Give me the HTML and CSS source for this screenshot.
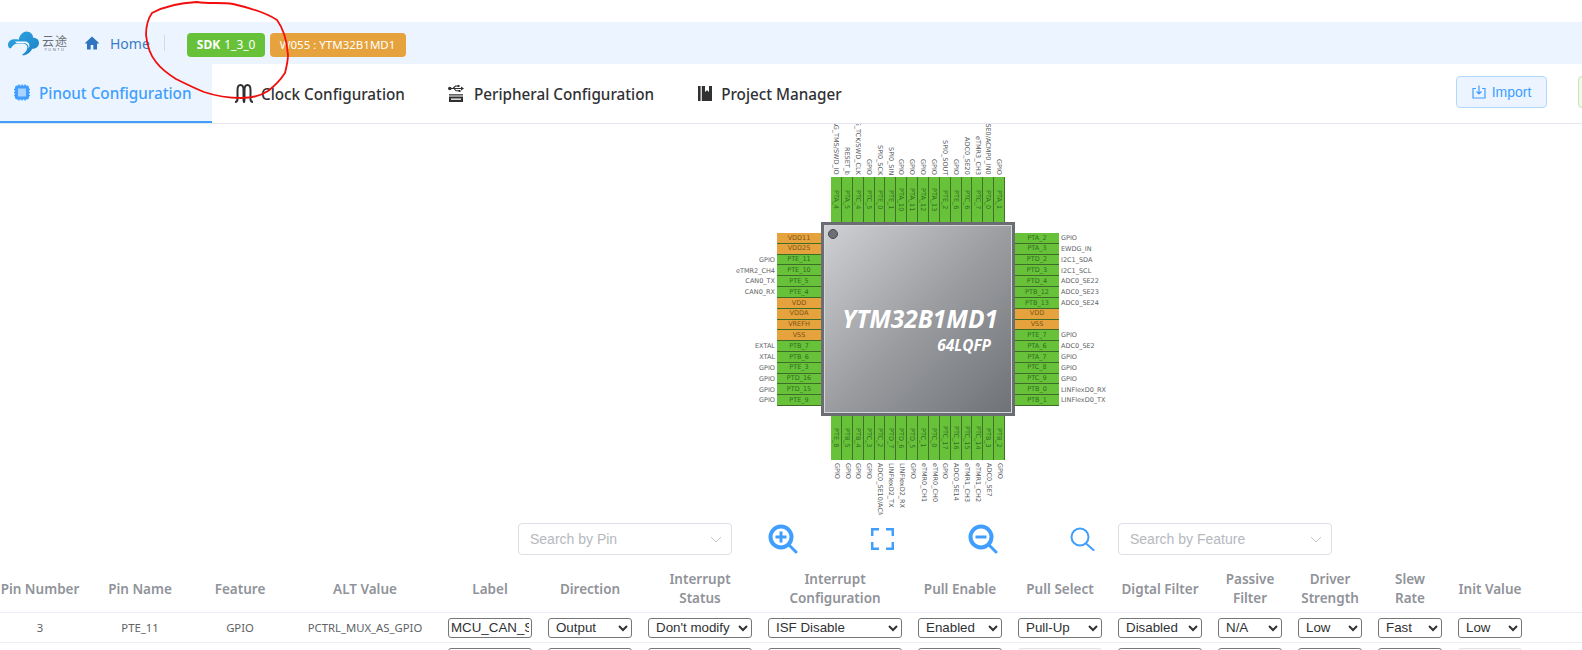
FILE: index.html
```html
<!DOCTYPE html>
<html lang="en">
<head>
<meta charset="utf-8">
<title>Pinout Configuration</title>
<link rel="stylesheet" href="styles.css">
</head>
<body>
<div class="page">
  <header class="topbar">
    <div class="logo">
      <svg class="logo-mark" viewBox="0 0 32 25" aria-hidden="true">
        <defs><linearGradient id="cloud" x1="0" y1="0" x2="1" y2="1"><stop offset="0" stop-color="#2fa8e6"/><stop offset="1" stop-color="#1c7fc4"/></linearGradient></defs>
        <path fill="url(#cloud)" d="M0 14c0-4 3-6 7-6 2 0 3 0 4 .5C12 4 15 0 19 0c4 0 7 3 7 6.500 4 0 6 2.500 6 5.500 0 3.500-3 6-7 6-1.500 3.500-4.500 6-9 7l-1.500-1c3-1.500 5-3.500 5.500-7 .3-2.500-1.500-4-4-4.500H10c-3 0-5 1.500-7 5C1 17.500 0 16 0 14z"/>
        <path fill="#fff" d="M7 10.500h10c3 0 5.500 1.800 5 5-.1.800-.3 1.500-.6 2.200.1-3-1.400-5.700-5.400-5.700H9z"/>
      </svg>
      <div class="logo-text"><span class="logo-cn">云途</span><span class="logo-en">YUNTU</span></div>
    </div>
    <a class="home">
      <svg class="home-icon" viewBox="0 0 14 14" aria-hidden="true"><path fill="#2f74c0" d="M7 .5 0 7l1 1 1-.9V13.500h3.700V9h2.600v4.500H12V7.100l1 .9 1-1z"/></svg>
      <span>Home</span>
    </a>
    <span class="divider"></span>
    <span class="badge badge-green"><b>SDK</b> 1_3_0</span>
    <span class="badge badge-orange">W055 : YTM32B1MD1</span>
  </header>

  <nav class="tabs">
    <a class="tab tab-active">
      <svg class="tab-icon" viewBox="0 0 16 16" aria-hidden="true"><path fill="#409eff" d="M3 1h10a2 2 0 0 1 2 2v10a2 2 0 0 1-2 2H3a2 2 0 0 1-2-2V3a2 2 0 0 1 2-2z"/><rect x="4" y="4" width="8" height="8" fill="#a8d2ff"/><path stroke="#409eff" stroke-width="1.500" d="M0 5h2M0 8h2M0 11h2M14 5h2M14 8h2M14 11h2M5 0v2M8 0v2M11 0v2M5 14v2M8 14v2M11 14v2"/></svg>
      <span>Pinout Configuration</span>
    </a>
    <a class="tab tab-clock">
      <svg class="tab-icon tab-icon-wide" viewBox="0 0 18 19" aria-hidden="true"><path fill="none" stroke="#303133" stroke-width="2" d="M0 18c2 0 2.500-1 2.500-3V6c0-3 1-5 3-5s3 2 3 5v9c0 2 .5 3 .5 3s.5-1 .5-3V6c0-3 1-5 3-5s3 2 3 5v9c0 2 .5 3 2.500 3"/></svg>
      <span>Clock Configuration</span>
    </a>
    <a class="tab tab-periph">
      <svg class="tab-icon" viewBox="0 0 16 17" aria-hidden="true"><circle cx="1.800" cy="3.500" r="1.800" fill="#303133"/><path fill="#303133" d="M13 1.500 16 3.500 13 5.500z"/><path fill="none" stroke="#303133" stroke-width="1.100" d="M2 3.500h11M5 3.500 7.500 1H10M6 3.500 8 5.800h3"/><rect x="9.500" y="0" width="2" height="2" fill="#303133"/><rect x="10.500" y="5" width="2" height="2" fill="#303133"/><path fill="#303133" d="M1 9.200h14v1.300H1zM1 11.500h14V17H1z"/><rect x="3" y="13.500" width="10" height="1.300" fill="#fff"/></svg>
      <span>Peripheral Configuration</span>
    </a>
    <a class="tab tab-project">
      <svg class="tab-icon tab-icon-small" viewBox="0 0 14 15" aria-hidden="true"><path fill="#303133" d="M0 0h2.600v15H0zM3.800 0H7v6l2-1.700L11 6V0h3v15H3.800z"/></svg>
      <span>Project Manager</span>
    </a>
    <div class="tab-actions">
      <button class="btn btn-import">
        <svg class="btn-icon" viewBox="0 0 14 14" aria-hidden="true"><path fill="none" stroke="#409eff" stroke-width="1.200" d="M4 3.500H1v9.500h12V3.500h-3M7 .5v8M4.500 6.500 7 9l2.500-2.500"/></svg>
        <span>Import</span>
      </button>
      <button class="btn btn-export"></button>
    </div>
  </nav>

  <main class="main">
    <section class="chip">
      <div class="labels-top">
        <span>JTAG_TMS/SWD_IO</span><span>RESET_b</span><span>JTAG_TCK/SWD_CLK</span><span>GPIO</span><span>SPI0_SCK</span><span>SPI0_SIN</span><span>GPIO</span><span>GPIO</span><span>GPIO</span><span>GPIO</span><span>SPI0_SOUT</span><span>GPIO</span><span>ADC0_SE20</span><span>eTMR3_CH3</span><span>ADC0_SE0/ACMP0_IN0</span><span>GPIO</span>
      </div>
      <div class="pins-top">
        <span class="pin">PTA_4</span><span class="pin">PTA_5</span><span class="pin">PTC_4</span><span class="pin">PTC_5</span><span class="pin">PTE_0</span><span class="pin">PTE_1</span><span class="pin">PTA_10</span><span class="pin">PTA_11</span><span class="pin">PTA_12</span><span class="pin">PTA_13</span><span class="pin">PTE_2</span><span class="pin">PTE_6</span><span class="pin">PTC_6</span><span class="pin">PTC_7</span><span class="pin">PTA_0</span><span class="pin">PTA_1</span>
      </div>
      <div class="labels-left">
        <span></span><span></span><span>GPIO</span><span>eTMR2_CH4</span><span>CAN0_TX</span><span>CAN0_RX</span><span></span><span></span><span></span><span></span><span>EXTAL</span><span>XTAL</span><span>GPIO</span><span>GPIO</span><span>GPIO</span><span>GPIO</span>
      </div>
      <div class="pins-left">
        <span class="pin pin-power">VDD11</span><span class="pin pin-power">VDD25</span><span class="pin">PTE_11</span><span class="pin">PTE_10</span><span class="pin">PTE_5</span><span class="pin">PTE_4</span><span class="pin pin-power">VDD</span><span class="pin pin-power">VDDA</span><span class="pin pin-power">VREFH</span><span class="pin pin-power">VSS</span><span class="pin">PTB_7</span><span class="pin">PTB_6</span><span class="pin">PTE_3</span><span class="pin">PTD_16</span><span class="pin">PTD_15</span><span class="pin">PTE_9</span>
      </div>
      <div class="package">
        <div class="package-inner">
          <span class="dot"></span>
          <div class="part">YTM32B1MD1</div>
          <div class="pkg">64LQFP</div>
        </div>
      </div>
      <div class="pins-right">
        <span class="pin">PTA_2</span><span class="pin">PTA_3</span><span class="pin">PTD_2</span><span class="pin">PTD_3</span><span class="pin">PTD_4</span><span class="pin">PTB_12</span><span class="pin">PTB_13</span><span class="pin pin-power">VDD</span><span class="pin pin-power">VSS</span><span class="pin">PTE_7</span><span class="pin">PTA_6</span><span class="pin">PTA_7</span><span class="pin">PTC_8</span><span class="pin">PTC_9</span><span class="pin">PTB_0</span><span class="pin">PTB_1</span>
      </div>
      <div class="labels-right">
        <span>GPIO</span><span>EWDG_IN</span><span>I2C1_SDA</span><span>I2C1_SCL</span><span>ADC0_SE22</span><span>ADC0_SE23</span><span>ADC0_SE24</span><span></span><span></span><span>GPIO</span><span>ADC0_SE2</span><span>GPIO</span><span>GPIO</span><span>GPIO</span><span>LINFlexD0_RX</span><span>LINFlexD0_TX</span>
      </div>
      <div class="pins-bottom">
        <span class="pin">PTE_8</span><span class="pin">PTB_5</span><span class="pin">PTB_4</span><span class="pin">PTC_3</span><span class="pin">PTC_2</span><span class="pin">PTD_7</span><span class="pin">PTD_6</span><span class="pin">PTD_5</span><span class="pin">PTC_1</span><span class="pin">PTC_0</span><span class="pin">PTC_17</span><span class="pin">PTC_16</span><span class="pin">PTC_15</span><span class="pin">PTC_14</span><span class="pin">PTB_3</span><span class="pin">PTB_2</span>
      </div>
      <div class="labels-bottom">
        <span>GPIO</span><span>GPIO</span><span>GPIO</span><span>GPIO</span><span>ADC0_SE10/ACMP</span><span>LINFlexD2_TX</span><span>LINFlexD2_RX</span><span>GPIO</span><span>eTMR0_CH1</span><span>eTMR0_CH0</span><span>GPIO</span><span>ADC0_SE14</span><span>eTMR1_CH3</span><span>eTMR1_CH2</span><span>ADC0_SE7</span><span>GPIO</span>
      </div>
    </section>

    <section class="search-row">
      <div class="search-select"><span>Search by Pin</span><svg class="chev" viewBox="0 0 12 7" aria-hidden="true"><path fill="none" stroke="#c0c4cc" d="M1 1l5 5 5-5"/></svg></div>
      <svg class="tool tool-in" viewBox="0 0 30 30" aria-hidden="true"><circle cx="13" cy="13" r="10.500" fill="none" stroke="#409eff" stroke-width="4"/><path stroke="#409eff" stroke-width="3" stroke-linecap="round" d="M21 21l7 7"/><path stroke="#409eff" stroke-width="3" d="M7.500 13h11M13 7.500v11"/></svg>
      <svg class="tool tool-full" viewBox="0 0 23 22" aria-hidden="true"><path fill="none" stroke="#409eff" stroke-width="2.500" d="M8 1.200H1.200V8M15 1.200h6.800V8M8 20.800H1.200V14M15 20.800h6.800V14"/></svg>
      <svg class="tool tool-out" viewBox="0 0 30 30" aria-hidden="true"><circle cx="13" cy="13" r="10.500" fill="none" stroke="#409eff" stroke-width="4"/><path stroke="#409eff" stroke-width="3" stroke-linecap="round" d="M21 21l7 7"/><path stroke="#409eff" stroke-width="3" d="M7.500 13h11"/></svg>
      <svg class="tool tool-search" viewBox="0 0 25 24" aria-hidden="true"><circle cx="10" cy="10" r="8.500" fill="none" stroke="#409eff" stroke-width="2"/><path stroke="#409eff" stroke-width="2" stroke-linecap="round" d="M16 16.500l7.500 6.500"/></svg>
      <div class="search-select search-feature"><span>Search by Feature</span><svg class="chev" viewBox="0 0 12 7" aria-hidden="true"><path fill="none" stroke="#c0c4cc" d="M1 1l5 5 5-5"/></svg></div>
    </section>

    <table class="grid">
      <colgroup>
        <col class="c80"><col class="c120"><col class="c80"><col class="c160"><col class="c100"><col class="c100"><col class="c120"><col class="c150"><col class="c100"><col class="c100"><col class="c100"><col class="c80"><col class="c80"><col class="c80"><col class="c80"><col>
      </colgroup>
      <thead>
        <tr>
          <th>Pin Number</th><th>Pin Name</th><th>Feature</th><th class="alt">ALT Value</th><th>Label</th><th>Direction</th><th>Interrupt<br>Status</th><th>Interrupt<br>Configuration</th><th>Pull Enable</th><th>Pull Select</th><th>Digtal Filter</th><th>Passive<br>Filter</th><th>Driver<br>Strength</th><th>Slew<br>Rate</th><th>Init Value</th><th></th>
        </tr>
      </thead>
      <tbody>
        <tr>
          <td>3</td><td>PTE_11</td><td>GPIO</td><td class="alt">PCTRL_MUX_AS_GPIO</td>
          <td><input class="ctl" value="MCU_CAN_STB"></td>
          <td><select class="ctl"><option>Output</option></select></td>
          <td><select class="ctl"><option>Don't modify</option></select></td>
          <td><select class="ctl"><option>ISF Disable</option></select></td>
          <td><select class="ctl"><option>Enabled</option></select></td>
          <td><select class="ctl"><option>Pull-Up</option></select></td>
          <td><select class="ctl"><option>Disabled</option></select></td>
          <td><select class="ctl"><option>N/A</option></select></td>
          <td><select class="ctl"><option>Low</option></select></td>
          <td><select class="ctl"><option>Fast</option></select></td>
          <td><select class="ctl"><option>Low</option></select></td>
          <td></td>
        </tr>
        <tr>
          <td>4</td><td>PTE_10</td><td>eTMR2_CH4</td><td class="alt">PCTRL_MUX_ALT</td>
          <td><input class="ctl" value=""></td>
          <td><select class="ctl"><option>Output</option></select></td>
          <td><select class="ctl"><option>Don't modify</option></select></td>
          <td><select class="ctl"><option>ISF Disable</option></select></td>
          <td><select class="ctl"><option>Disabled</option></select></td>
          <td><select class="ctl" disabled><option>N/A</option></select></td>
          <td><select class="ctl"><option>Disabled</option></select></td>
          <td><select class="ctl"><option>N/A</option></select></td>
          <td><select class="ctl"><option>Low</option></select></td>
          <td><select class="ctl"><option>Fast</option></select></td>
          <td><select class="ctl" disabled><option>Low</option></select></td>
          <td></td>
        </tr>
      </tbody>
    </table>
  </main>

  <svg class="scribble" viewBox="0 0 1582 650" aria-hidden="true">
    <path fill="none" stroke="#f20d0d" stroke-width="1.800" d="M197 2C176 3 163 7 152 13C147 20 146 28 146 35C147 44 150 55 156 62C162 70 168 74 176 79C186 84 194 88 204 92C216 96 228 98 241 98C252 98 262 95 268 91C276 85 281 79 285 73C287 65 288 60 288 55C287 42 283 28 277 20C268 14 255 9 233 4C222 2 208 4 197 2Z"/>
  </svg>
</div>
</body>
</html>
```

FILE: styles.css
```css
html, body {
  margin: 0;
  padding: 0;
  background: #fff;
  overflow: hidden;
}

.page {
  position: relative;
  width: 1582px;
  height: 650px;
  overflow: hidden;
  padding-top: 22px;
  box-sizing: border-box;
  font-family: "Noto Sans", "Liberation Sans", sans-serif;
}

/* top bar */
.topbar {
  height: 42px;
  background: #ecf5ff;
  display: flex;
  align-items: center;
  padding-left: 8px;
}

.logo {
  display: flex;
  align-items: center;
  gap: 3px;
  width: 60px;
  flex: none;
}

.logo-mark {
  width: 31px;
  height: 25px;
  flex: none;
}

.logo-text {
  display: flex;
  flex-direction: column;
  align-items: center;
  color: #6b7075;
  margin-top: 2px;
  flex: none;
}

.logo-cn {
  font-family: "Noto Sans CJK SC", sans-serif;
  font-size: 12px;
  line-height: 12px;
  letter-spacing: 1px;
  white-space: nowrap;
}

.logo-en {
  font-size: 4px;
  line-height: 6px;
  letter-spacing: 1.500px;
}

.home {
  display: flex;
  align-items: center;
  margin-left: 17px;
  color: #3a7cc6;
  font-size: 14px;
}

.home-icon {
  width: 14px;
  height: 14px;
  margin-right: 11px;
}

.divider {
  width: 1px;
  height: 16px;
  background: #d6dbe1;
  margin-left: 14px;
  margin-right: 22px;
}

.badge {
  height: 24px;
  margin-top: 3px;
  box-sizing: border-box;
  display: flex;
  align-items: center;
  gap: 4px;
  padding: 0 10px;
  border-radius: 4px;
  color: #fff;
  font-size: 12px;
  white-space: nowrap;
}

.badge-green {
  background: #67c23a;
  width: 78px;
  margin-right: 5px;
}

.badge-orange {
  background: #e6a23c;
  width: 136px;
  font-size: 11.500px;
}

/* tabs */
.tabs {
  height: 60px;
  box-sizing: border-box;
  border-bottom: 1px solid #e4e7ed;
  display: flex;
  align-items: stretch;
  font-size: 15.250px;
  font-weight: 500;
  color: #303133;
}

.tab {
  display: flex;
  align-items: center;
  gap: 9px;
  white-space: nowrap;
}

.tab-active {
  width: 212px;
  box-sizing: border-box;
  padding-left: 14px;
  background: #ecf5ff;
  color: #409eff;
  border-bottom: 2px solid #409eff;
  margin-bottom: 0;
}

.tab-clock { margin-left: 23px; gap: 8px; }
.tab-periph { margin-left: 43px; gap: 10px; }
.tab-project { margin-left: 44px; gap: 9px; }

.tab-icon {
  width: 16px;
  height: 17px;
  flex: none;
}

.tab-icon-wide {
  width: 18px;
  height: 19px;
}

.tab-icon-small {
  width: 14px;
  height: 15px;
}

.tab-actions {
  margin-left: auto;
  display: flex;
  align-items: center;
  gap: 31px;
  margin-right: -100px;
  padding-bottom: 4px;
}

.btn {
  height: 32px;
  box-sizing: border-box;
  border-radius: 4px;
  display: flex;
  align-items: center;
  justify-content: center;
  gap: 6px;
  font-family: "Liberation Sans", sans-serif;
  font-size: 14px;
  font-weight: 400;
  padding: 0;
}

.btn-import {
  width: 91px;
  background: #ecf5ff;
  border: 1px solid #b3d8ff;
  color: #409eff;
}

.btn-export {
  width: 104px;
  background: #f0f9eb;
  border: 1px solid #c2e7b0;
}

.btn-icon {
  width: 14px;
  height: 14px;
}

/* chip diagram */
.chip {
  display: grid;
  grid-template-columns: 70px 44px 194px 44px 70px;
  grid-template-rows: 53px 45px 194px 44px 55px;
  margin-left: 707px;
  width: 422px;
  font-family: "DejaVu Sans", sans-serif;
  font-size: 6.500px;
}

.labels-top, .pins-top, .pins-bottom, .labels-bottom {
  grid-column: 3;
  display: grid;
  grid-template-columns: repeat(16, 1fr);
  padding: 0 10px;
}

.labels-left, .pins-left, .pins-right, .labels-right {
  grid-row: 3;
  display: grid;
  grid-template-rows: repeat(16, 1fr);
  padding: 11px 0 10px;
}

.labels-top { grid-row: 1; }
.pins-top { grid-row: 2; }
.pins-bottom { grid-row: 4; }
.labels-bottom { grid-row: 5; }
.labels-left { grid-column: 1; }
.pins-left { grid-column: 2; }
.package { grid-column: 3; grid-row: 3; }
.pins-right { grid-column: 4; }
.labels-right { grid-column: 5; }

.pin {
  background: #67c23a;
  color: #2f6d1c;
  box-sizing: border-box;
  border: 1px solid #40702a;
  display: flex;
  align-items: center;
  justify-content: center;
  line-height: 1;
  overflow: hidden;
  white-space: nowrap;
}

.pins-left .pin, .pins-right .pin {
  border-width: 0 0 1px;
  border-color: #3d6b28;
}

.pins-top .pin, .pins-bottom .pin {
  writing-mode: vertical-rl;
  border-width: 0 1px 0 0;
}

.pin-power {
  background: #e6a23c;
  color: #7c5518;
}

.labels-top span, .labels-bottom span {
  writing-mode: vertical-rl;
  color: #55585c;
  white-space: nowrap;
  display: flex;
  align-items: center;
  line-height: 1;
  overflow: hidden;
}

.labels-top span {
  justify-content: flex-end;
  padding-bottom: 2px;
  padding-right: 1px;
}

.labels-bottom span {
  justify-content: flex-start;
  padding-top: 3px;
}

.labels-left span, .labels-right span {
  color: #606366;
  display: flex;
  align-items: center;
  white-space: nowrap;
  line-height: 1;
}

.labels-left span {
  justify-content: flex-end;
  padding-right: 2px;
}

.labels-right span {
  padding-left: 2px;
}

.package {
  background: #6a6e73;
  padding: 3px;
  box-sizing: border-box;
}

.package-inner {
  height: 100%;
  box-sizing: border-box;
  border: 1px solid #d3d5d8;
  background: linear-gradient(135deg, #cfd0d4 0%, #9b9da1 50%, #6f7276 100%);
  position: relative;
  display: flex;
  flex-direction: column;
  align-items: flex-end;
  font-family: "Open Sans", sans-serif;
  font-weight: 700;
  font-style: italic;
  color: #fff;
}

.dot {
  position: absolute;
  left: 3px;
  top: 3px;
  width: 8px;
  height: 8px;
  border-radius: 50%;
  background: #6c7075;
  border: 1px solid #46494d;
}

.part {
  font-size: 24.500px;
  line-height: 24px;
  margin-top: 81px;
  margin-right: 13px;
  white-space: nowrap;
}

.pkg {
  font-size: 15.400px;
  line-height: 18px;
  margin-top: 6px;
  margin-right: 20px;
}

/* search row */
.search-row {
  display: flex;
  align-items: center;
  height: 32px;
  margin-top: 8px;
  padding-left: 518px;
}

.search-select {
  width: 214px;
  height: 32px;
  box-sizing: border-box;
  border: 1px solid #dcdfe6;
  border-radius: 4px;
  padding: 0 9px 0 11px;
  display: flex;
  align-items: center;
  justify-content: space-between;
  color: #b5b8be;
  font-family: "Liberation Sans", sans-serif;
  font-size: 14px;
  background: #fff;
}

.chev {
  width: 12px;
  height: 7px;
}

.tool { flex: none; }
.tool-in { width: 30px; height: 30px; margin-left: 36px; }
.tool-full { width: 23px; height: 22px; margin-left: 73px; }
.tool-out { width: 30px; height: 30px; margin-left: 74px; }
.tool-search { width: 25px; height: 24px; margin-left: 72px; }
.search-feature { margin-left: 23px; }

/* table */
.grid {
  width: 100%;
  table-layout: fixed;
  border-collapse: collapse;
  margin-top: 11px;
  font-size: 11.300px;
  color: #606266;
}

.c80 { width: 80px; }
.c100 { width: 100px; }
.c120 { width: 120px; }
.c150 { width: 150px; }
.c160 { width: 160px; }

.grid th {
  height: 46px;
  padding: 0;
  font-size: 13.500px;
  font-weight: 600;
  line-height: 19px;
  color: #909399;
  text-align: center;
  vertical-align: middle;
  border-bottom: 1px solid #ebeef5;
  white-space: nowrap;
}

.grid td {
  height: 30px;
  padding: 0 8px;
  text-align: center;
  border-bottom: 1px solid #ebeef5;
  white-space: nowrap;
  box-sizing: border-box;
}

.grid th.alt {
  padding-left: 10px;
}

.grid td.alt {
  padding: 0 0 0 10px;
}

.ctl {
  display: block;
  width: 100%;
  height: 20px;
  box-sizing: border-box;
  font-family: "Liberation Sans", sans-serif;
  font-size: 13.330px;
  color: #303133;
  padding: 0 3px;
  border: 1px solid #767676;
  border-radius: 3px;
  background: #fff;
}

input.ctl {
  padding: 0 2px;
}

select.ctl:disabled {
  background: #f4f4f4;
  border-color: #d8d8d8;
  color: #999;
}

/* hand-drawn annotation on top of the screenshot */
.scribble {
  position: absolute;
  left: 0;
  top: 0;
  width: 1582px;
  height: 650px;
  pointer-events: none;
}
```
